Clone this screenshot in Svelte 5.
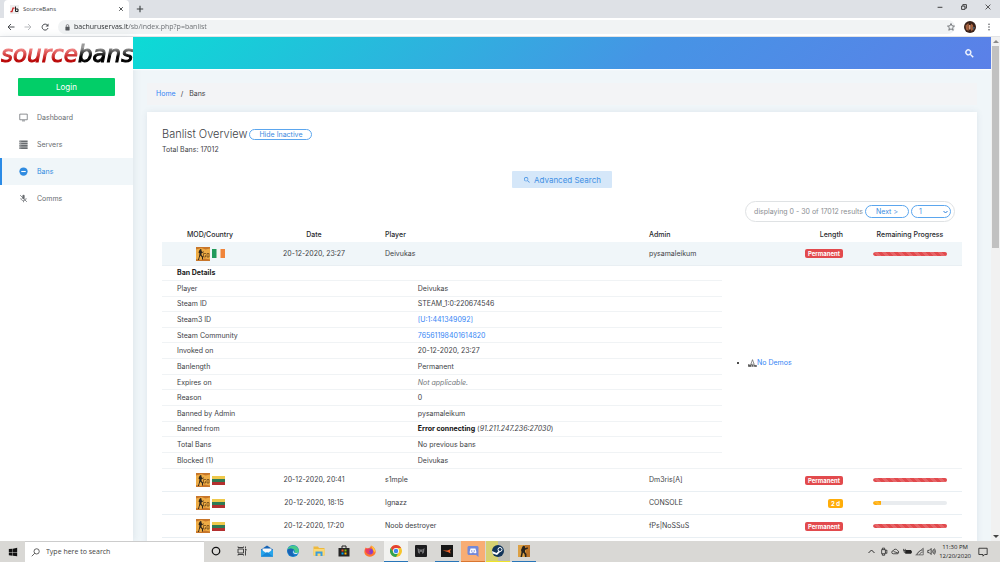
<script lang="ts">
    let showInactive = $state(true);
    let page = $state('1');

    const menu = [
        { label: 'Dashboard', icon: 'screen' },
        { label: 'Servers', icon: 'servers' },
        { label: 'Bans', icon: 'bans' },
        { label: 'Comms', icon: 'mic' }
    ];

    const bans = [
        { date: '20-12-2020, 23:27', flag: 'ie', player: 'Deivukas', admin: 'pysamaleikum', length: 'Permanent', progress: 100, open: true },
        { date: '20-12-2020, 20:41', flag: 'lt', player: 's1mple', admin: 'Dm3ris[A]', length: 'Permanent', progress: 100, open: false },
        { date: '20-12-2020, 18:15', flag: 'lt', player: 'Ignazz', admin: 'CONSOLE', length: '2 d', progress: 11, open: false },
        { date: '20-12-2020, 17:20', flag: 'lt', player: 'Noob destroyer', admin: 'fPs|NoSSuS', length: 'Permanent', progress: 100, open: false }
    ];

    const details = [
        { name: 'Player', value: 'Deivukas', kind: 'text' },
        { name: 'Steam ID', value: 'STEAM_1:0:220674546', kind: 'text' },
        { name: 'Steam3 ID', value: '[U:1:441349092]', kind: 'link' },
        { name: 'Steam Community', value: '76561198401614820', kind: 'link' },
        { name: 'Invoked on', value: '20-12-2020, 23:27', kind: 'text' },
        { name: 'Banlength', value: 'Permanent', kind: 'text' },
        { name: 'Expires on', value: 'Not applicable.', kind: 'muted' },
        { name: 'Reason', value: '0', kind: 'text' },
        { name: 'Banned by Admin', value: 'pysamaleikum', kind: 'text' },
        { name: 'Banned from', value: '91.211.247.236:27030', kind: 'server' },
        { name: 'Total Bans', value: 'No previous bans', kind: 'text' },
        { name: 'Blocked (1)', value: 'Deivukas', kind: 'text' }
    ];

    const apps = ['cortana', 'taskview', 'mail', 'edge', 'files', 'store', 'firefox', 'chrome', 'msi', 'asus', 'discord', 'steam', 'csgo'];
</script>

{#snippet magnifier()}
    <svg class="magnifier" viewBox="0 0 24 24" aria-hidden="true">
        <path fill="currentColor" d="M15.5 14h-.8l-.3-.3A6.5 6.5 0 1 0 13.700 14.400l.3.300v.8l5 5 1.500-1.500zm-6 0a4.500 4.500 0 1 1 0-9 4.500 4.500 0 0 1 0 9z" />
    </svg>
{/snippet}

{#snippet csgoIcon()}
    <svg class="mod" viewBox="0 0 28 28" role="img" aria-label="CS:GO">
        <rect width="28" height="28" fill="#eeac45" />
        <path d="M0 0h28v3l-9 2-8-3-11 3zM0 28h28v-3l-11-2-7 3-10-2z" fill="#c8762a" />
        <path d="M7 6l2-2 2 1v3l2 2 3-1v1l-4 2-1 1v3l3 3v6h-2v-4l-3-4-2 4-1 5H4l2-7 1-6-2-2 1-3z" fill="#2b251d" />
        <path d="M20 13h-5v7h4v-3h-1M22 13h4v7h-4z" fill="none" stroke="#6b4515" stroke-width="1.500" />
    </svg>
{/snippet}

{#snippet flagIcon(code: string)}
    <svg class="flag" viewBox="0 0 26 18" role="img" aria-label={code}>
        {#if code === 'ie'}
            <rect width="26" height="18" fill="#f4f4f0" />
            <rect width="9" height="18" fill="#219a5a" />
            <rect x="17" width="9" height="18" fill="#f0853a" />
        {:else}
            <rect width="26" height="6" fill="#efc94c" />
            <rect y="6" width="26" height="6" fill="#2e7a55" />
            <rect y="12" width="26" height="6" fill="#b4302f" />
        {/if}
    </svg>
{/snippet}

<div class="window">
    <div class="tabstrip">
        <div class="tab">
            <svg class="favicon" viewBox="0 0 18 18" aria-hidden="true">
                <rect width="18" height="18" fill="#eee" />
                <path d="M9 6H6L4 13H1" fill="none" stroke="#c22" stroke-width="2.500" />
                <path d="M11 3v10h5V8h-5" fill="none" stroke="#222" stroke-width="2" />
            </svg>
            <span class="tab-title">SourceBans</span>
            <button class="icon-button" aria-label="Close tab">
                <svg class="tiny" viewBox="0 0 10 10"><path d="M2 2l6 6M8 2l-6 6" stroke="#3c4043" stroke-width="1.500" /></svg>
            </button>
        </div>
        <button class="icon-button new-tab" aria-label="New tab">
            <svg class="glyph" viewBox="0 0 10 10"><path d="M5 1v8M1 5h8" stroke="#3c4043" stroke-width="1.400" /></svg>
        </button>
        <div class="window-buttons">
            <button class="icon-button" aria-label="Minimize">
                <svg class="tiny" viewBox="0 0 10 10"><path d="M1 5.500h8" stroke="#222" stroke-width="1.400" /></svg>
            </button>
            <button class="icon-button" aria-label="Restore">
                <svg class="tiny" viewBox="0 0 10 10"><path d="M1 3.500h5.500V9H1zM3 3V1h6v6H7" fill="none" stroke="#222" stroke-width="1.400" /></svg>
            </button>
            <button class="icon-button" aria-label="Close">
                <svg class="tiny" viewBox="0 0 10 10"><path d="M1 1l8 8M9 1l-8 8" stroke="#222" stroke-width="1.200" /></svg>
            </button>
        </div>
    </div>

    <div class="toolbar">
        <button class="icon-button" aria-label="Back">
            <svg class="glyph" viewBox="0 0 16 16"><path d="M15 8H2M8 2L2 8l6 6" fill="none" stroke="#4a4d51" stroke-width="2" /></svg>
        </button>
        <button class="icon-button" aria-label="Forward">
            <svg class="glyph" viewBox="0 0 16 16"><path d="M1 8h13M8 2l6 6-6 6" fill="none" stroke="#b9bbbe" stroke-width="2" /></svg>
        </button>
        <button class="icon-button" aria-label="Reload">
            <svg class="glyph" viewBox="0 0 16 16">
                <path d="M13 4.500A6 6 0 1 0 14 10" fill="none" stroke="#4a4d51" stroke-width="2" />
                <path d="M15 1v6H9z" fill="#4a4d51" />
            </svg>
        </button>
        <div class="address">
            <svg class="lock" viewBox="0 0 12 16" aria-hidden="true">
                <rect x="1" y="6" width="10" height="9" rx="1" fill="#55585c" />
                <path d="M3 7V4a3 3 0 0 1 6 0v3" fill="none" stroke="#55585c" stroke-width="1.600" />
            </svg>
            <input class="url" type="text" aria-label="Address" value="bachuruservas.lt/sb/index.php?p=banlist" />
            <button class="icon-button" aria-label="Bookmark">
                <svg class="glyph" viewBox="0 0 16 16"><path d="M8 1l2 4.700 5 .5-3.800 3.300 1.200 5L8 11.800l-4.400 2.700 1.200-5L1 6.200l5-.5z" fill="none" stroke="#55585c" stroke-width="1.500" /></svg>
            </button>
        </div>
        <button class="icon-button avatar" aria-label="Profile">
            <svg viewBox="0 0 24 24">
                <circle cx="12" cy="12" r="12" fill="#3a2219" />
                <path d="M3 9l6-5 1 8-1 8-5-3zM14 5l4 3 1 8-4 5-2-7z" fill="#a5623f" />
                <path d="M10 8h3v9h-3z" fill="#d9a184" />
                <path d="M17 12l5 0-3 7z" fill="#4b5a66" />
            </svg>
        </button>
        <button class="icon-button" aria-label="Menu">
            <svg class="glyph" viewBox="0 0 16 16" fill="#4a4d51"><circle cx="8" cy="2.500" r="1.500" /><circle cx="8" cy="8" r="1.500" /><circle cx="8" cy="13.500" r="1.500" /></svg>
        </button>
    </div>

    <div class="site">
        <nav class="sidebar">
            <a class="logo" href="/sb/"><span class="logo-red">source</span><span class="logo-black">bans</span></a>
            <button class="login">Login</button>
            <ul class="menu">
                {#each menu as item}
                    <li>
                        <a href="/sb/" class="menu-link" class:active={item.icon === 'bans'}>
                            <svg class="menu-icon" viewBox="0 0 24 24" aria-hidden="true">
                                {#if item.icon === 'screen'}
                                    <path d="M2 3h20v15H2zM8 21h8" fill="none" stroke="currentColor" stroke-width="2" />
                                {:else if item.icon === 'servers'}
                                    <path d="M1 1h22v5H1zM1 7h22v5H1zM1 13h22v5H1zM1 19h22v5H1z" fill="currentColor" />
                                    <path d="M3 3.500h3M3 9.500h3M3 15.500h3M3 21.500h3" stroke="#fff" />
                                {:else if item.icon === 'bans'}
                                    <circle cx="12" cy="12" r="11" fill="currentColor" />
                                    <path d="M6 12h12" stroke="#fff" stroke-width="3" />
                                {:else}
                                    <path d="M9 5a3 3 0 0 1 6 0v6a3 3 0 0 1-6 0z" fill="currentColor" />
                                    <path d="M5 11c0 9 14 9 14 0M12 18v4M3 3l18 18" fill="none" stroke="currentColor" stroke-width="2" />
                                {/if}
                            </svg>
                            {item.label}
                        </a>
                    </li>
                {/each}
            </ul>
        </nav>

        <main class="main">
            <header class="topbar">
                <button class="icon-button top-search" aria-label="Search">{@render magnifier()}</button>
            </header>

            <div class="content">
                <nav class="breadcrumb" aria-label="Breadcrumb">
                    <a href="/sb/">Home</a>
                    <span>/</span>
                    <span class="current">Bans</span>
                </nav>

                <section class="card">
                    <div class="heading">
                        <h1>Banlist Overview</h1>
                        <button class="pill" onclick={() => (showInactive = !showInactive)}>{showInactive ? 'Hide' : 'Show'} Inactive</button>
                    </div>
                    <p class="total">Total Bans: 17012</p>

                    <button class="advanced">{@render magnifier()}Advanced Search</button>

                    <div class="pager">
                        <span>displaying 0 - 30 of 17012 results</span>
                        <button class="pill next">Next &gt;</button>
                        <span class="select-wrap">
                            <select class="pill" aria-label="Page" bind:value={page}>
                                <option>1</option>
                                <option>2</option>
                                <option>3</option>
                            </select>
                            <svg class="caret" viewBox="0 0 10 8" aria-hidden="true"><path d="M1 2l4 4 4-4" fill="none" stroke="currentColor" stroke-width="2" /></svg>
                        </span>
                    </div>

                    <table class="bans">
                        <colgroup>
                            <col class="col-mod" />
                            <col class="col-date" />
                            <col class="col-player" />
                            <col class="col-admin" />
                            <col class="col-length" />
                            <col class="col-progress" />
                        </colgroup>
                        <thead>
                            <tr>
                                <th class="center">MOD/Country</th>
                                <th class="center">Date</th>
                                <th>Player</th>
                                <th>Admin</th>
                                <th class="right">Length</th>
                                <th class="center">Remaining Progress</th>
                            </tr>
                        </thead>
                        <tbody>
                            {#each bans as ban}
                                <tr class="ban" class:opened={ban.open}>
                                    <td class="center"><span class="icons">{@render csgoIcon()}{@render flagIcon(ban.flag)}</span></td>
                                    <td class="center">{ban.date}</td>
                                    <td>{ban.player}</td>
                                    <td>{ban.admin}</td>
                                    <td class="right"><span class="badge" class:timed={ban.progress < 100}>{ban.length}</span></td>
                                    <td>
                                        <div class="progress">
                                            <div class="bar" class:timed={ban.progress < 100} style="width: {ban.progress}%"></div>
                                        </div>
                                    </td>
                                </tr>
                                {#if ban.open}
                                    <tr class="expanded">
                                        <td colspan="6">
                                            <div class="detail-layout">
                                                <table class="details">
                                                    <colgroup>
                                                        <col class="col-name" />
                                                        <col />
                                                    </colgroup>
                                                    <tbody>
                                                        <tr><th colspan="2">Ban Details</th></tr>
                                                        {#each details as row}
                                                            <tr>
                                                                <td>{row.name}</td>
                                                                <td>
                                                                    {#if row.kind === 'link'}
                                                                        <a href="/sb/">{row.value}</a>
                                                                    {:else if row.kind === 'muted'}
                                                                        <i class="muted">{row.value}</i>
                                                                    {:else if row.kind === 'server'}
                                                                        <b>Error connecting</b> (<i>{row.value}</i>)
                                                                    {:else}
                                                                        {row.value}
                                                                    {/if}
                                                                </td>
                                                            </tr>
                                                        {/each}
                                                    </tbody>
                                                </table>
                                                <ul class="demos">
                                                    <li>
                                                        <svg class="demo-icon" viewBox="0 0 26 24" aria-hidden="true">
                                                            <path d="M0 23v-7h4v3h3v-3h3v7zM12 23v-5h4v5zM18 23v-6h3v2h5v4z" fill="#444" />
                                                            <path d="M13 2l5 14H8z" fill="none" stroke="#555" stroke-width="2" />
                                                        </svg><a href="/sb/">No Demos</a>
                                                    </li>
                                                </ul>
                                            </div>
                                        </td>
                                    </tr>
                                {/if}
                            {/each}
                        </tbody>
                    </table>
                </section>
            </div>
        </main>

        <div class="scrollbar">
            <svg class="arrow" viewBox="0 0 8 8"><path d="M1 5.500l3-3 3 3z" fill="#8a8a8a" /></svg>
            <div class="thumb"></div>
            <svg class="arrow" viewBox="0 0 8 8"><path d="M1 2.500l3 3 3-3z" fill="#444" /></svg>
        </div>
    </div>

    <footer class="taskbar">
        <button class="start" aria-label="Start">
            <svg class="app-icon" viewBox="0 0 24 24"><path d="M2 5l9-1v8H2zM12 4l10-2v10H12zM2 13h9v8l-9-1zM12 13h10v9l-10-1z" fill="#111" /></svg>
        </button>
        <label class="search-box">
            <svg class="search-icon" viewBox="0 0 24 24"><circle cx="15" cy="9" r="7" fill="none" stroke="#333" stroke-width="2" /><path d="M10 14l-8 8" stroke="#333" stroke-width="2" /></svg>
            <input type="text" aria-label="Search Windows" placeholder="Type here to search" />
        </label>
        <div class="apps">
            {#each apps as app}
                <button class="app {app}" aria-label={app}>
                    <svg class="app-icon" viewBox="0 0 24 24">
                        {#if app === 'cortana'}
                            <circle cx="12" cy="12" r="7.500" fill="none" stroke="#111" stroke-width="2.500" />
                        {:else if app === 'taskview'}
                            <path d="M4 8h11v8H4zM4 3v2h11V3M4 21v-2h11v2M19 3v4M19 11v10" fill="none" stroke="#333" stroke-width="1.800" />
                            <rect x="18" y="8" width="3" height="3" fill="#333" />
                        {:else if app === 'mail'}
                            <path d="M0 9l12-8 12 8v14H0z" fill="#1463b5" />
                            <path d="M3 7h18v10H3z" fill="#f4f8fb" />
                            <path d="M0 9l12 8 12-8v14H0z" fill="#27a4ea" />
                            <path d="M0 23l12-9 12 9z" fill="#1787d6" />
                        {:else if app === 'edge'}
                            <circle cx="12" cy="12" r="12" fill="#1581cf" />
                            <path d="M1 9C4-1 22-3 24 12c0 4-6 6-9 3 3-8-8-9-14-6z" fill="#46c98b" />
                            <path d="M1 10c5-5 13-3 13 1-5-1-5 8 2 10-8 4-15-3-15-11z" fill="#1a62b3" />
                            <path d="M14 11c-2 2 0 6 5 5 2 0 3-1 4-2-1 5-10 6-11 0 0-2 1-3 2-3z" fill="#d8e8ef" />
                        {:else if app === 'files'}
                            <path d="M1 3h9l2 3h11v15H1z" fill="#eeb93d" />
                            <path d="M1 8h22v13H1z" fill="#fcd873" />
                            <path d="M5 22v-9h14v9h-4v-5H9v5z" fill="#3a9ddd" />
                        {:else if app === 'store'}
                            <path d="M8 7V2h8v5" fill="none" stroke="#222" stroke-width="2" />
                            <path d="M1 6h22v17H1z" fill="#252525" />
                            <path d="M7 9h4v4H7z" fill="#f15123" /><path d="M13 9h4v4h-4z" fill="#7fba00" />
                            <path d="M7 15h4v4H7z" fill="#00a3ee" /><path d="M13 15h4v4h-4z" fill="#ffb900" />
                        {:else if app === 'firefox'}
                            <path d="M3 5l4 2 5-2 2-4c9 4 10 11 9 15-4 10-19 10-22 0-1-5 1-7 2-11z" fill="#ff762f" />
                            <path d="M14 1c8 4 9 10 8 14l-4-5c0-4-3-5-4-9z" fill="#ffcb3d" />
                            <circle cx="12" cy="13" r="6" fill="#853fcb" />
                            <path d="M3 8c5-3 10 0 10 3-4 0-4 4 1 5-6 4-13-1-11-8z" fill="#ed3c5f" />
                        {:else if app === 'chrome'}
                            <circle cx="12" cy="12" r="12" fill="#f7c52b" />
                            <path d="M1.600 6A12 12 0 0 1 22.400 6H12L8 15z" fill="#e44134" />
                            <path d="M1.600 6A12 12 0 0 0 12 24l5-9H7z" fill="#31a350" />
                            <circle cx="12" cy="12" r="6" fill="#fff" /><circle cx="12" cy="12" r="4.500" fill="#4087ef" />
                        {:else if app === 'msi'}
                            <rect width="24" height="24" rx="2" fill="#1d1d1f" />
                            <path d="M5 6l4 3h6l4-3-1 9-3 3-1-4h-4l-1 4-3-3z" fill="#77777a" />
                            <path d="M9 11l1 2M15 11l-1 2M12 15v4" fill="none" stroke="#1d1d1f" stroke-width="1.500" />
                        {:else if app === 'asus'}
                            <rect width="24" height="24" fill="#171717" />
                            <path d="M3 11l10 0 7-3-2 4 1 5-5-3z" fill="#f0642d" />
                        {:else if app === 'discord'}
                            <path d="M3 2h18l2 2v20l-5-4H3l-2-2V4z" fill="#7489d8" />
                            <path d="M7 7l10 0 2 8-3 2-2-2h-4l-2 2-3-2z" fill="#fff" />
                            <circle cx="9.500" cy="12" r="1.500" fill="#7489d8" /><circle cx="14.500" cy="12" r="1.500" fill="#7489d8" />
                        {:else if app === 'steam'}
                            <circle cx="12" cy="12" r="12" fill="#123559" />
                            <circle cx="16" cy="9" r="4" fill="none" stroke="#fff" stroke-width="2" />
                            <path d="M0 12l9 4 4-4 3 2-6 6-9-3z" fill="#fff" />
                        {:else}
                            <rect width="24" height="24" fill="#dca044" /><path d="M14 0h10v24h-7z" fill="#b97228" />
                            <path d="M9 3l3-2 2 2v3l6-1v2l-6 3v4l3 4v6h-3l-1-6-3-3-2 9H5l2-10-1-4z" fill="#27231e" />
                        {/if}
                    </svg>
                </button>
            {/each}
        </div>
        <div class="tray">
            <svg class="tray-icon" viewBox="0 0 24 24"><path d="M4 16l8-8 8 8" fill="none" stroke="#222" stroke-width="2.500" /></svg>
            <svg class="tray-icon" viewBox="0 0 24 24"><path d="M7 7h10v11H7zM9 7V3h6v4M9 18v4h6v-4M17 10l4-2v9l-4-2" fill="none" stroke="#222" stroke-width="2" /></svg>
            <svg class="tray-icon" viewBox="0 0 24 24"><path d="M6 18a4 4 0 0 1 0-8 6 6 0 0 1 11-1 5 5 0 0 1 1 9zM7 12l12 4" fill="none" stroke="#222" stroke-width="2" /></svg>
            <svg class="tray-icon" viewBox="0 0 24 24"><path d="M6 8h16v10H6zM22 11h2v4h-2z" fill="#222" /><path d="M1 5v4h5V5M3 9v5h5" fill="none" stroke="#222" stroke-width="2" /></svg>
            <svg class="tray-icon" viewBox="0 0 24 24"><path d="M2 21L22 3v18zM6 21a16 16 0 0 1 16-13M12 21a10 10 0 0 1 10-8" fill="none" stroke="#555" stroke-width="2" /></svg>
            <svg class="tray-icon" viewBox="0 0 24 24"><path d="M2 9h4l5-5v16l-5-5H2zM14 9q2 3 0 6M17 6q4 6 0 12M20 4q5 8 0 16" fill="none" stroke="#222" stroke-width="2" /></svg>
            <div class="clock"><span>11:30 PM</span><span>12/20/2020</span></div>
            <svg class="tray-icon notice" viewBox="0 0 24 24"><path d="M2 3h20v15h-6l-4 4v-4H2z" fill="none" stroke="#222" stroke-width="2" /></svg>
        </div>
    </footer>
</div>

<style>
    :global(body) {
        margin: 0;
    }

    .window {
        display: flex;
        flex-direction: column;
        height: 100vh;
        overflow: hidden;
        font-family: Inter, 'Open Sans', sans-serif;
        font-size: 7px;
        line-height: 10px;
        color: #3d4145;
    }

    .window * {
        box-sizing: border-box;
    }

    button,
    input,
    select {
        margin: 0;
        padding: 0;
        border: 0;
        background: none;
        font: inherit;
        color: inherit;
        outline: none;
    }

    svg {
        display: block;
        flex-shrink: 0;
    }

    a {
        color: #3585f5;
        text-decoration: none;
    }

    ul {
        margin: 0;
        padding: 0;
    }

    .icon-button {
        display: flex;
        align-items: center;
        justify-content: center;
        flex-shrink: 0;
    }

    .glyph {
        width: 8px;
        height: 8px;
    }

    .tiny {
        width: 6px;
        height: 6px;
    }

    /* browser */
    .tabstrip {
        display: flex;
        flex-shrink: 0;
        height: 18px;
        padding-left: 4px;
        background: #dee1e6;
        font-family: 'Open Sans', sans-serif;
    }

    .tab {
        display: flex;
        align-items: center;
        gap: 4px;
        width: 125px;
        padding: 0 5px 0 6px;
        border-radius: 4px 4px 0 0;
        background: #fff;
    }

    .favicon {
        width: 9px;
        height: 9px;
    }

    .tab-title {
        flex: 1;
        font-size: 6px;
    }

    .new-tab {
        width: 22px;
    }

    .window-buttons {
        display: flex;
        gap: 18px;
        margin-left: auto;
        padding: 0 9px 4px 0;
    }

    .toolbar {
        display: flex;
        align-items: center;
        flex-shrink: 0;
        gap: 9px;
        height: 19px;
        padding: 0 7px;
        border-bottom: 1px solid #e2e3e5;
        background: #fff;
    }

    .address {
        display: flex;
        align-items: center;
        flex: 1;
        gap: 4px;
        height: 14px;
        padding: 0 0 0 7px;
        border-radius: 7px;
        background: #f1f3f4;
    }

    .lock {
        width: 5px;
        height: 7px;
    }

    /* the host part of the address is darker than the path */
    .url {
        flex: 1;
        min-width: 0;
        font-family: 'Open Sans', sans-serif;
        color: transparent;
        background: linear-gradient(90deg, #25282b 54px, #66696d 54px);
        background-clip: text;
    }

    .avatar svg {
        width: 12px;
        height: 12px;
    }

    /* site */
    .site {
        display: flex;
        flex: 1;
        min-height: 0;
        background: #f0f6f9;
    }

    .sidebar {
        width: 133px;
        flex-shrink: 0;
        background: #fff;
        box-shadow: 0 0 8px rgba(80, 110, 130, 0.15);
    }

    .logo {
        display: block;
        height: 41px;
        padding: 3px 0 0 1px;
        overflow: hidden;
        font: italic 23px/28px 'DejaVu Sans', sans-serif;
        white-space: nowrap;
    }

    .logo-red,
    .logo-black {
        color: transparent;
        background: linear-gradient(#f08080 30%, #b90505 75%);
        background-clip: text;
        -webkit-text-stroke: 1px transparent;
    }

    .logo-black {
        background: linear-gradient(#999 25%, #000 60%);
        background-clip: text;
    }

    .login {
        display: block;
        width: 97px;
        height: 18px;
        margin-left: 18px;
        border-radius: 1px;
        background: #02ce68;
        font-size: 8px;
        color: #fff;
    }

    .menu {
        margin-top: 8px;
        list-style: none;
    }

    .menu-link {
        display: flex;
        align-items: center;
        gap: 9px;
        height: 27px;
        padding-left: 17px;
        border-left: 2px solid transparent;
        color: #686c70;
    }

    .menu-link.active {
        border-left-color: #2b8be6;
        background: #f0f6f9;
        color: #2f8be0;
    }

    .menu-icon {
        width: 9px;
        height: 9px;
    }

    .main {
        display: flex;
        flex-direction: column;
        flex: 1;
        min-width: 0;
        overflow: hidden;
    }

    .topbar {
        display: flex;
        align-items: center;
        justify-content: flex-end;
        flex-shrink: 0;
        height: 32px;
        padding-right: 16px;
        background: linear-gradient(135deg, #0cdbd5, #4694e5 60%, #5b80e8);
        box-shadow: 0 1px 1px rgba(255, 255, 255, 0.9);
        color: #fff;
    }

    .magnifier {
        width: 8px;
        height: 8px;
    }

    .top-search .magnifier {
        width: 11px;
        height: 11px;
        stroke: currentColor;
    }

    .content {
        display: flex;
        flex-direction: column;
        gap: 7px;
        padding: 14px 14px 0;
    }

    .breadcrumb {
        display: flex;
        align-items: center;
        gap: 5px;
        height: 22px;
        padding: 0 9px;
        background: #f3f4f6;
    }

    .current {
        margin-left: 1px;
    }

    .card {
        display: flex;
        flex-direction: column;
        padding: 15px 15px 40px;
        background: #fff;
        box-shadow: 0 0 6px rgba(80, 110, 130, 0.12);
    }

    .heading {
        display: flex;
        align-items: center;
        gap: 2px;
        height: 14px;
    }

    h1 {
        margin: 0;
        font-size: 11px;
        font-weight: 300;
    }

    .pill {
        height: 11px;
        padding: 1px 9px 0;
        border: 1px solid #5ba6ee;
        border-radius: 6px;
        font-size: 7px;
        line-height: 8px;
        color: #3d8be0;
    }

    .total {
        margin: 4px 0 0;
    }

    .advanced {
        display: flex;
        align-items: center;
        align-self: center;
        gap: 3px;
        height: 17px;
        margin-top: 16px;
        padding: 0 11px;
        border-radius: 1px;
        background: #d5e7f9;
        font-size: 8px;
        color: #4290e4;
    }

    .pager {
        display: flex;
        align-items: center;
        align-self: flex-end;
        gap: 2px;
        height: 21px;
        margin: 13px 7px 0 0;
        padding: 0 3px 0 8px;
        border: 1px solid #dfe2e4;
        border-radius: 11px;
        color: #8a8e92;
    }

    .pager .pill {
        width: 44px;
        height: 13px;
        border-radius: 7px;
    }

    .pager select.pill {
        width: 40px;
        padding: 0 7px;
        appearance: none;
    }

    .select-wrap {
        position: relative;
        display: flex;
    }

    .caret {
        position: absolute;
        top: 5px;
        right: 3px;
        width: 5px;
        height: 4px;
        color: #2b7fdc;
        pointer-events: none;
    }

    table {
        width: 100%;
        border-collapse: collapse;
        table-layout: fixed;
    }

    th,
    td {
        padding: 1px 15px 0;
        text-align: left;
        font-weight: 400;
        white-space: nowrap;
    }

    .bans {
        margin-top: 4px;
    }

    .bans thead th {
        height: 16px;
        padding-top: 2px;
        font-weight: 500;
        color: #26292c;
    }

    .col-mod {
        width: 12%;
    }

    .col-date {
        width: 14%;
    }

    .col-player {
        width: 33%;
    }

    .col-admin {
        width: 17%;
    }

    .col-length {
        width: 11%;
    }

    .col-progress {
        width: 13%;
    }

    .bans .center {
        padding-right: 0;
        padding-left: 0;
        text-align: center;
    }

    .bans .right {
        text-align: right;
    }

    .ban {
        height: 23px;
        border-bottom: 1px solid #e9eff3;
    }

    .ban.opened {
        background: #f0f6f9;
    }

    .icons {
        display: flex;
        align-items: center;
        justify-content: center;
        gap: 2px;
    }

    .mod {
        width: 14px;
        height: 14px;
    }

    .flag {
        width: 13px;
        height: 9px;
    }

    .badge {
        display: inline-block;
        padding: 0 3px;
        border-radius: 2px;
        background: #e24a4d;
        font-size: 6px;
        font-weight: 700;
        line-height: 9px;
        color: #fff;
        vertical-align: middle;
    }

    .badge.timed,
    .bar.timed {
        background-color: #ffad0a;
    }

    .progress {
        height: 4px;
        overflow: hidden;
        border-radius: 2px;
        background: #e9ecef;
    }

    .bar {
        height: 4px;
        border-radius: 2px 0 0 2px;
        background-color: #e24a4d;
        background-image: linear-gradient(45deg, rgba(255, 255, 255, 0.15) 25%, transparent 25%, transparent 50%, rgba(255, 255, 255, 0.15) 50%, rgba(255, 255, 255, 0.15) 75%, transparent 75%);
        background-size: 8px 8px;
    }

    .expanded {
        border-bottom: 1px solid #f0f3f5;
    }

    .expanded > td {
        padding: 0;
    }

    .detail-layout {
        display: flex;
        align-items: center;
    }

    .details {
        width: 70%;
        height: 202px;
    }

    .details tr + tr {
        border-top: 1px solid #f0f3f5;
    }

    .details th {
        font-weight: 700;
        color: #222;
    }

    .col-name {
        width: 43%;
    }

    .details b {
        color: #111;
    }

    .muted {
        color: #73777b;
    }

    .demos {
        padding: 0 0 8px 26px;
    }

    .demos li {
        color: #111;
    }

    .demo-icon {
        display: inline-block;
        width: 9px;
        height: 8px;
        vertical-align: -2px;
    }

    .scrollbar {
        display: flex;
        flex-direction: column;
        align-items: center;
        width: 9px;
        flex-shrink: 0;
        background: #f1f1f1;
    }

    .arrow {
        width: 8px;
        height: 9px;
    }

    .thumb {
        width: 7px;
        height: 40%;
        margin-bottom: auto;
        background: #c1c1c1;
    }

    /* taskbar */
    .taskbar {
        display: flex;
        flex-shrink: 0;
        height: 21px;
        background: #d9d8d5;
        font-family: 'Open Sans', sans-serif;
        color: #222;
    }

    .start {
        display: flex;
        align-items: center;
        justify-content: center;
        width: 25px;
    }

    .app-icon {
        width: 12px;
        height: 12px;
    }

    .start .app-icon {
        width: 10px;
        height: 10px;
    }

    .search-box {
        display: flex;
        align-items: center;
        gap: 6px;
        width: 179px;
        padding-left: 6px;
        border-top: 1px solid #ccc;
        background: #fff;
    }

    .search-box input {
        flex: 1;
        min-width: 0;
    }

    .search-box input::placeholder {
        color: #444;
    }

    .search-icon {
        width: 9px;
        height: 9px;
    }

    .apps {
        display: flex;
        justify-content: space-between;
        width: 332px;
    }

    .app {
        display: flex;
        align-items: center;
        justify-content: center;
        width: 24px;
        border-bottom: 1px solid transparent;
    }

    .chrome {
        border-color: #2775b8;
        background: #f2f2f0;
    }

    .asus,
    .csgo {
        border-color: #2775b8;
    }

    .discord {
        border-color: #d9762f;
        background: #f8ad74;
    }

    .steam {
        border-color: #f0e52a;
        background: linear-gradient(90deg, #d5d172 50%, #bdbdb6 50%);
    }

    .tray {
        display: flex;
        align-items: center;
        gap: 3px;
        margin-left: auto;
        padding-right: 12px;
    }

    .tray-icon {
        width: 9px;
        height: 9px;
    }

    .clock {
        display: flex;
        flex-direction: column;
        align-items: center;
        margin-right: 4px;
        font-size: 6px;
        line-height: 9px;
    }

    .notice {
        width: 10px;
        height: 10px;
    }
</style>
